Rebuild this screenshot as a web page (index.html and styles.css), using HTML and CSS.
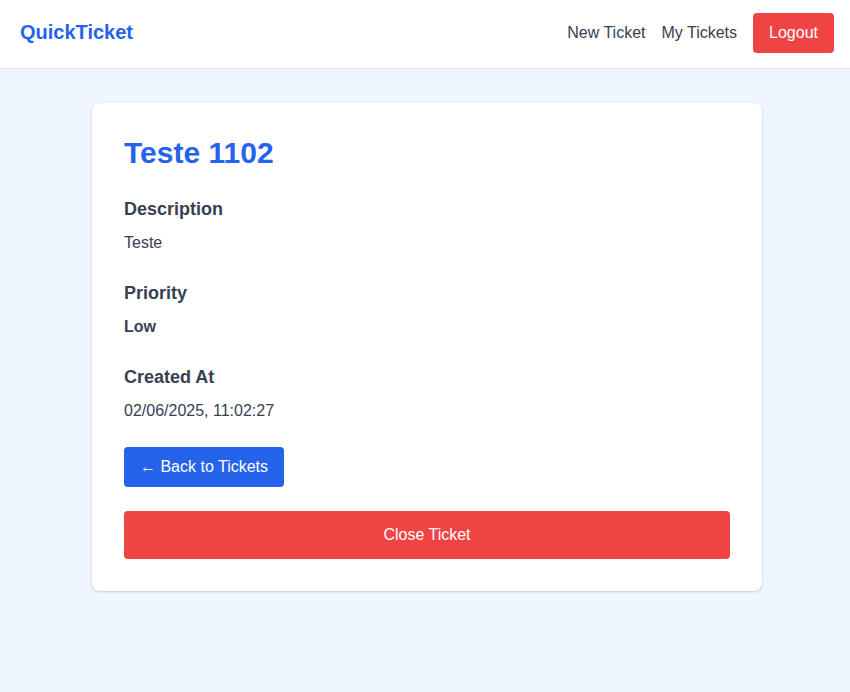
FILE: index.html
```html
<!DOCTYPE html>
<html lang="en">
<head>
<meta charset="utf-8">
<title>QuickTicket</title>
<link rel="stylesheet" href="styles.css">
</head>
<body>
<header class="topbar">
  <a class="brand" href="#">QuickTicket</a>
  <nav class="nav">
    <a class="nav-link" href="#">New Ticket</a>
    <a class="nav-link" href="#">My Tickets</a>
    <button class="btn btn-red btn-logout">Logout</button>
  </nav>
</header>
<main class="main">
  <section class="card">
    <h1 class="title">Teste 1102</h1>
    <div class="field">
      <h2 class="label">Description</h2>
      <p class="value">Teste</p>
    </div>
    <div class="field">
      <h2 class="label">Priority</h2>
      <p class="value value-bold">Low</p>
    </div>
    <div class="field">
      <h2 class="label">Created At</h2>
      <p class="value">02/06/2025, 11:02:27</p>
    </div>
    <div class="actions">
      <button class="btn btn-blue">&larr; Back to Tickets</button>
    </div>
    <button class="btn btn-red btn-close">Close Ticket</button>
  </section>
</main>
</body>
</html>
```

FILE: styles.css
```css
* { box-sizing: border-box; }
html, body { margin: 0; padding: 0; }
body {
  font-family: "Liberation Sans", Arial, sans-serif;
  background: #eff6ff;
  color: #374151;
  min-height: 692px;
}
.topbar {
  height: 69px;
  background: #fff;
  border-bottom: 1px solid #e5e7eb;
  display: flex;
  align-items: center;
  justify-content: space-between;
  padding: 0 16px 0 20px;
}
.brand {
  font-size: 20px;
  font-weight: 700;
  color: #2563eb;
  text-decoration: none;
  line-height: 28px;
  margin-top: -4px;
}
.nav {
  display: flex;
  align-items: center;
  gap: 16px;
}
.nav-link {
  color: #374151;
  text-decoration: none;
  font-size: 16px;
  line-height: 24px;
  margin-top: -3px;
}
.btn {
  font-family: inherit;
  font-size: 16px;
  line-height: 24px;
  border: none;
  border-radius: 4px;
  color: #fff;
  padding: 8px 16px;
  cursor: pointer;
}
.btn-red { background: #ef4444; }
.btn-blue { background: #2563eb; }
.btn-logout { margin-top: -2px; }
.main {
  padding: 34px 0 0 4px;
}
.card {
  width: 670px;
  margin: 0 auto;
  background: #fff;
  border-radius: 8px;
  box-shadow: 0 1px 3px rgba(0,0,0,0.12), 0 1px 2px rgba(0,0,0,0.06);
  padding: 32px;
}
.title {
  margin: 0 0 24px;
  font-size: 30px;
  line-height: 36px;
  font-weight: 700;
  color: #2563eb;
}
.field { margin-bottom: 24px; }
.label {
  margin: 0 0 8px;
  font-size: 18px;
  line-height: 28px;
  font-weight: 700;
  color: #374151;
}
.value {
  margin: 0;
  font-size: 16px;
  line-height: 24px;
  color: #374151;
}
.value-bold { font-weight: 700; }
.actions { display: flex; }
.btn-close {
  display: block;
  width: 100%;
  margin-top: 24px;
  padding: 12px 16px;
}
```
